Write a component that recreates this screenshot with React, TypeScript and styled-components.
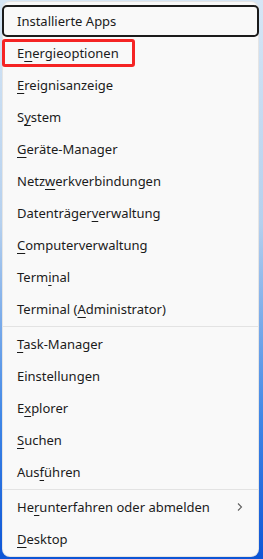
import styled, { createGlobalStyle } from "styled-components";

type Item = { label: string; key?: number; sub?: boolean } | "sep";

const items: Item[] = [
  { label: "Installierte Apps" },
  { label: "Energieoptionen", key: 1 },
  { label: "Ereignisanzeige", key: 0 },
  { label: "System", key: 1 },
  { label: "Geräte-Manager", key: 0 },
  { label: "Netzwerkverbindungen", key: 4 },
  { label: "Datenträgerverwaltung", key: 11 },
  { label: "Computerverwaltung", key: 0 },
  { label: "Terminal", key: 4 },
  { label: "Terminal (Administrator)", key: 10 },
  "sep",
  { label: "Task-Manager", key: 0 },
  { label: "Einstellungen" },
  { label: "Explorer", key: 1 },
  { label: "Suchen", key: 0 },
  { label: "Ausführen", key: 3 },
  "sep",
  { label: "Herunterfahren oder abmelden", key: 2, sub: true },
  { label: "Desktop", key: 0 },
];

const Global = createGlobalStyle`
  html, body {
    margin: 0;
    height: 100%;
  }
  body {
    background: linear-gradient(180deg, #d6e6f5 0%, #b5d0ee 40%, #3f86e6 75%, #0d55d6 100%);
    font-family: "Segoe UI", "Noto Sans", "Open Sans", sans-serif;
  }
`;

const Page = styled.div`
  padding: 1px 0 0 2px;
`;

const Menu = styled.div`
  width: 257px;
  box-sizing: border-box;
  background: #f9f9f9;
  border: 1px solid rgba(0, 0, 0, 0.08);
  border-radius: 8px;
  padding: 3px 0 1px;
  display: flex;
  flex-direction: column;
`;

const Row = styled.div<{ $focused?: boolean }>`
  position: relative;
  height: 32px;
  display: flex;
  align-items: center;
  justify-content: space-between;
  padding: 0 14px 0 14px;
  font-size: 13px;
  color: #1b1b1b;
  white-space: nowrap;
  border-radius: 5px;
  ${(p) =>
    p.$focused &&
    `
    outline: 2px solid #1b1b1b;
    outline-offset: -2px;
    margin: 0 -1px;
    padding-left: 15px;
  `}
`;

const Key = styled.span`
  text-decoration: underline;
  text-underline-offset: 3px;
  text-decoration-thickness: 1px;
`;

const Mark = styled.span`
  position: absolute;
  left: -1px;
  top: 2px;
  width: 133px;
  height: 28px;
  box-sizing: border-box;
  border: 3px solid #f52424;
  border-radius: 3px;
`;

const Separator = styled.div`
  height: 1px;
  margin: 1px 0;
  background: #e3e3e3;
`;

const Chevron = () => (
  <svg width="8" height="10" viewBox="0 0 8 10">
    <polyline points="2,1.5 5.5,5 2,8.5" fill="none" stroke="#5f5f5f" strokeWidth="1.1" />
  </svg>
);

const Label = ({ label, k }: { label: string; k?: number }) => {
  if (k === undefined) return <span>{label}</span>;
  return (
    <span>
      {label.slice(0, k)}
      <Key>{label[k]}</Key>
      {label.slice(k + 1)}
    </span>
  );
};

export default function App() {
  return (
    <Page>
      <Global />
      <Menu>
        {items.map((it, i) =>
          it === "sep" ? (
            <Separator key={i} />
          ) : (
            <Row key={i} $focused={i === 0}>
              <Label label={it.label} k={it.key} />
              {it.sub ? <Chevron /> : null}
              {i === 1 ? <Mark /> : null}
            </Row>
          )
        )}
      </Menu>
    </Page>
  );
}
